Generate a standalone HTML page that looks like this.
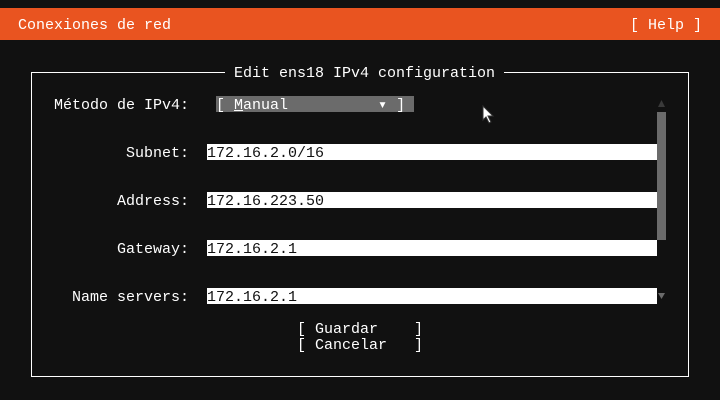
<!DOCTYPE html>
<html><head><meta charset="utf-8"><style>
html,body{margin:0;padding:0;background:#111;width:720px;height:400px;overflow:hidden}
body{position:relative;font-family:"Liberation Mono","DejaVu Sans Mono",monospace;font-size:15px;color:#fff}
.t{position:absolute;white-space:pre;line-height:16px;height:14px;padding-top:2px;overflow:hidden}
.hdr{position:absolute;left:0;top:8px;width:720px;height:32px;background:#e95420}
.box{position:absolute;left:31px;top:72px;width:658px;height:305px;border:1px solid #fff;box-sizing:border-box}
.fld{position:absolute;left:207px;width:450px;background:#fff;color:#111}
</style></head><body>
<div class="hdr"></div>
<div class="t" style="left:18px;top:16px">Conexiones de red</div>
<div class="t" style="left:630px;top:16px">[ Help ]</div>
<div class="box"></div>
<div class="t" style="left:225px;top:64px;background:#111">&nbsp;Edit ens18 IPv4 configuration&nbsp;</div>
<div class="t" style="left:54px;top:96px">Método de IPv4:</div>
<div class="t" style="left:216px;top:96px;width:198px;background:#6b6b6b">[ <u>M</u>anual          ▾ ]</div>
<div class="t" style="left:126px;top:144px">Subnet:</div>
<div class="fld t" style="top:144px">172.16.2.0/16</div>
<div class="t" style="left:117px;top:192px">Address:</div>
<div class="fld t" style="top:192px">172.16.223.50</div>
<div class="t" style="left:117px;top:240px">Gateway:</div>
<div class="fld t" style="top:240px">172.16.2.1</div>
<div class="t" style="left:72px;top:288px">Name servers:</div>
<div class="fld t" style="top:288px">172.16.2.1</div>
<div class="t" style="left:297px;top:320px">[ Guardar    ]</div>
<div class="t" style="left:297px;top:336px">[ Cancelar   ]</div>
<div style="position:absolute;left:657px;top:112px;width:9px;height:128px;background:#6b6b6b"></div>
<svg style="position:absolute;left:657px;top:100px" width="9" height="8"><polygon points="4.5,0 8,7 1,7" fill="#3a3a3a"/></svg>
<svg style="position:absolute;left:657px;top:292px" width="9" height="8"><polygon points="1,1 8,1 4.5,7" fill="#6b6b6b"/></svg>
<svg style="position:absolute;left:482px;top:105px" width="14" height="20"><polygon points="1,1 1,15 4,12 7,18 9,17 6,11 11,11" fill="#fff" stroke="#333" stroke-width="1"/></svg>
</body></html>
